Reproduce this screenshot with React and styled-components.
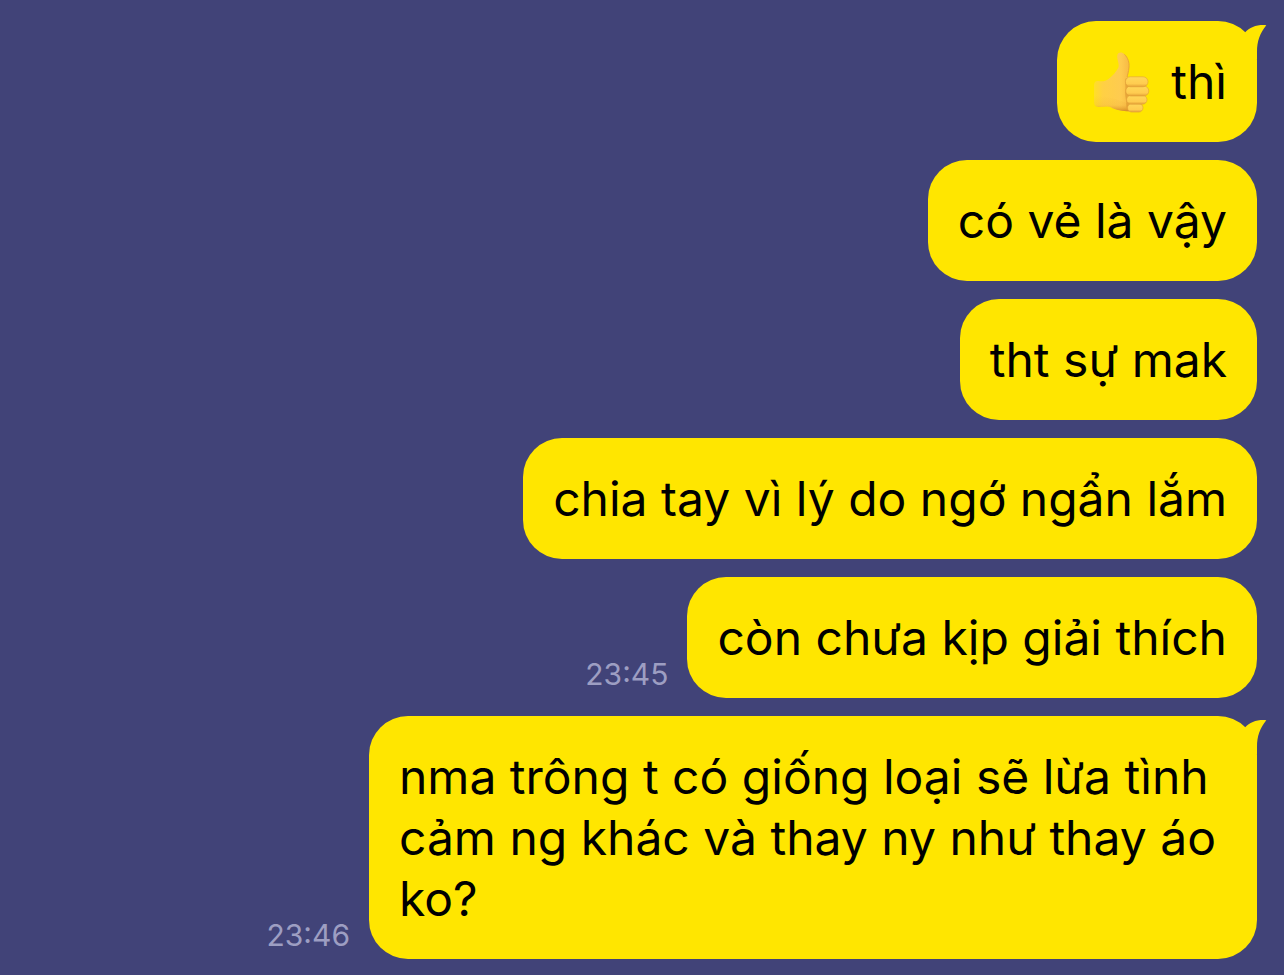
import React from "react";
import styled, { createGlobalStyle } from "styled-components";

const GlobalStyle = createGlobalStyle`
  * { box-sizing: border-box; }
  body {
    margin: 0;
    background: #414378;
    font-family: Inter, Roboto, "Liberation Sans", sans-serif;
  }
`;

const Chat = styled.main`
  min-height: 100vh;
  padding: 21px 27px 16px;
  background: #414378;
`;

const MessageList = styled.ol`
  display: flex;
  flex-direction: column;
  gap: 18px;
  margin: 0;
  padding: 0;
  list-style: none;
`;

const MessageRow = styled.li`
  display: flex;
  justify-content: flex-end;
  align-items: flex-end;
  gap: 19px;
`;

const Bubble = styled.div`
  position: relative;
  max-width: 888px;
  padding: 30px;
  border-radius: 39px;
  background: #ffe600;
`;

const MessageText = styled.p`
  display: flex;
  align-items: center;
  gap: 18px;
  margin: 0;
  color: #000;
  font-size: 48px;
  line-height: 61px;
`;

const Time = styled.time`
  flex: none;
  padding-bottom: 6px;
  color: #9d9ec2;
  font-size: 30px;
  line-height: 36px;
`;

const TailShape = styled.svg`
  position: absolute;
  top: 3px;
  right: -10px;
  display: block;
`;

const Emoji = styled.svg`
  flex: none;
  display: block;
  overflow: visible;
`;

function Tail() {
  return (
    <TailShape width="24" height="36" viewBox="0 0 24 36" aria-hidden="true">
      <path fill="#ffe600" d="M2 8.6 C7 3 14 .5 23.3 1.2 C17 9 14 17 14 28 V35 H2 Z" />
    </TailShape>
  );
}

const fingers = [
  { x: 40.5, y: 55.5, width: 15.5, height: 8.6 },
  { x: 39.6, y: 47.2, width: 20.4, height: 9 },
  { x: 38.8, y: 38, width: 23, height: 10 },
  { x: 38.4, y: 28.8, width: 22.6, height: 10 },
];

function ThumbsUp() {
  return (
    <Emoji width="66" height="61" viewBox="0 3 66 61" role="img" aria-label="thumbs up">
      <defs>
        <linearGradient id="hand" x1="0" y1="0" x2="1" y2="0">
          <stop offset="0" stopColor="#ffdf28" />
          <stop offset="0.25" stopColor="#ffd044" />
          <stop offset="0.75" stopColor="#fecb50" />
          <stop offset="1" stopColor="#f6b844" />
        </linearGradient>
        <linearGradient id="finger" x1="0" y1="0" x2="0" y2="1">
          <stop offset="0" stopColor="#ffd75a" />
          <stop offset="0.7" stopColor="#ffcc50" />
          <stop offset="1" stopColor="#e5a136" />
        </linearGradient>
        <linearGradient id="underside" x1="0" y1="0" x2="0" y2="1">
          <stop offset="0" stopColor="#e79b2b" stopOpacity="0" />
          <stop offset="0.6" stopColor="#e79b2b" stopOpacity="0.15" />
          <stop offset="1" stopColor="#c9791c" stopOpacity="0.75" />
        </linearGradient>
      </defs>
      <path
        fill="url(#hand)"
        d="M7 38 C7 34 8.5 33 11 33 C15 33.6 18.5 33.5 21.5 31 C25.5 28 29.5 23.5 31.4 19.5 C32.6 16 30 12 30.2 8 C30.6 4 34.8 3.6 37.5 6.4 C41 9.8 42.4 14.5 42 19 C41.6 24 40.4 27 40.6 31 L43 48 V63.4 C36 63 28 62 24 59.2 C21 57.6 15 59.6 10 58.8 C7.4 58.2 7 56 7 53 Z"
      />
      <path
        fill="url(#underside)"
        d="M7 48 C15 47 27 50 42 56 V63.2 C36 63 28 62 24 59.2 C21 57.6 15 59.6 10 58.8 C7.4 58.2 7 56 7 53 Z"
      />
      <path fill="none" stroke="#e9a536" strokeWidth="1" d="M37.5 6.4 C41 9.8 42.4 14.5 42 19 C41.6 24 40.4 27 40.2 29" />
      <path fill="#d98f2c" opacity="0.55" d="M39 30 C37 34 39.2 38 38.2 42 C37.6 48 39.6 52 39.2 56 C39.2 60 41 63 43 63.2 V30 Z" />
      {fingers.map((finger) => (
        <rect
          key={finger.y}
          {...finger}
          rx={finger.height / 2}
          fill="url(#finger)"
          stroke="#e0a038"
          strokeWidth="0.6"
        />
      ))}
    </Emoji>
  );
}

const messages = [
  { text: "thì", emoji: true, tail: true },
  { text: "có vẻ là vậy" },
  { text: "tht sự mak" },
  { text: "chia tay vì lý do ngớ ngẩn lắm" },
  { text: "còn chưa kịp giải thích", time: "23:45" },
  {
    text: "nma trông t có giống loại sẽ lừa tình cảm ng khác và thay ny như thay áo ko?",
    time: "23:46",
    tail: true,
  },
];

export default function App() {
  return (
    <>
      <GlobalStyle />
      <Chat>
        <MessageList>
          {messages.map(({ text, emoji, time, tail }) => (
            <MessageRow key={text}>
              {time && <Time dateTime={time}>{time}</Time>}
              <Bubble>
                {tail && <Tail />}
                <MessageText>
                  {emoji && <ThumbsUp />}
                  <span>{text}</span>
                </MessageText>
              </Bubble>
            </MessageRow>
          ))}
        </MessageList>
      </Chat>
    </>
  );
}
